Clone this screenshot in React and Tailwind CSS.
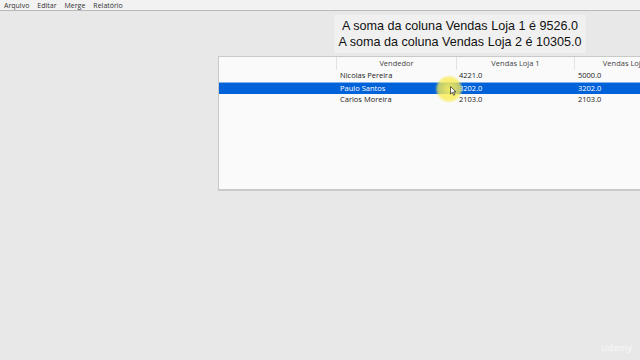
import React from 'react';

const menu = ['Arquivo', 'Editar', 'Merge', 'Relatório'];

const rows = [
  { name: 'Nicolas Pereira', a: '4221.0', b: '5000.0' },
  { name: 'Paulo Santos', a: '3202.0', b: '3202.0', selected: true },
  { name: 'Carlos Moreira', a: '2103.0', b: '2103.0' },
];

const cols = 'grid grid-cols-[118px_120px_118px_120px]';

const App = () => {
  return (
    <div className="relative h-[360px] w-[640px] overflow-hidden bg-[#e8e8e8] font-['Open_Sans',sans-serif]">
      {/* menu bar */}
      <div className="flex h-[11px] items-center gap-[8px] border-b border-[#b9b9b9] bg-[#f2f2f2] pl-[4px] text-[7px] leading-none text-[#333]">
        {menu.map((m) => (
          <span key={m}>{m}</span>
        ))}
      </div>

      {/* totals */}
      <div className="ml-[334px] mt-[4px] flex w-[252px] flex-col items-center bg-[#f0f0f0] py-[3px] font-['Liberation_Sans',Arial,sans-serif] text-[12.6px] leading-[16px] text-[#111]">
        <div>A soma da coluna Vendas Loja 1 é 9526.0</div>
        <div>A soma da coluna Vendas Loja 2 é 10305.0</div>
      </div>

      {/* table */}
      <div className="ml-[218px] mt-[3px] h-[135px] w-[440px] border-l border-t border-[#c9c9c9] border-b-2 border-b-[#c8c9cd] bg-[#fafafa] text-[7.5px] leading-none">
        <div className={`${cols} h-[13px] items-center text-[#444]`}>
          <div className="h-full border-r border-[#e3e3e3]" />
          <div className="flex h-full items-center justify-center border-r border-[#e3e3e3]">Vendedor</div>
          <div className="flex h-full items-center justify-center border-r border-[#e3e3e3]">Vendas Loja 1</div>
          <div className="flex h-full items-center justify-center pr-[16px]">Vendas Loja 2</div>
        </div>
        {rows.map((r) => (
          <div
            key={r.name}
            className={`${cols} h-[12px] items-center ${
              r.selected ? 'border-t border-[#7fb3f0] bg-[#0062d9] text-white' : 'text-[#222]'
            }`}
          >
            <div />
            <div className="pl-[3px]">{r.name}</div>
            <div className="pl-[2px]">{r.a}</div>
            <div className="pl-[3px]">{r.b}</div>
          </div>
        ))}
      </div>

      {/* cursor highlight */}
      <div className="absolute left-[435px] top-[75px] h-[28px] w-[28px] rounded-full bg-[radial-gradient(circle,rgba(250,240,90,0.95)_0%,rgba(250,235,80,0.75)_55%,rgba(250,235,80,0)_72%)]" />
      <svg className="absolute left-[450px] top-[86px]" width="7" height="10" viewBox="0 0 7 10">
        <path d="M0.5 0.5 L0.5 8 L2.3 6.3 L3.6 9.2 L4.8 8.7 L3.5 5.9 L6 5.9 Z" fill="#fff" stroke="#222" strokeWidth="0.7" />
      </svg>

      {/* watermark */}
      <div className="absolute bottom-[6px] right-[8px] text-[9px] font-semibold text-white/60">Udemy</div>
    </div>
  );
};

export default App;
